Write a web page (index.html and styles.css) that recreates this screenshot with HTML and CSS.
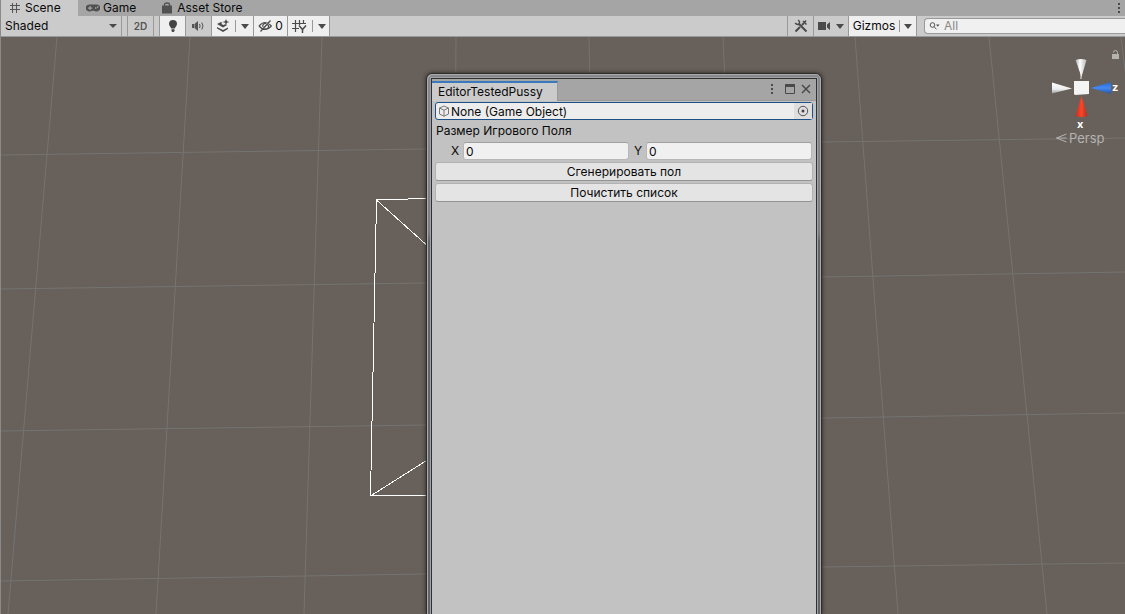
FILE: index.html
```html
<!DOCTYPE html>
<html lang="ru">
<head>
<meta charset="utf-8">
<title>Scene</title>
<link rel="stylesheet" href="styles.css">
</head>
<body>
<div class="editor">
  <nav class="tabs" role="tablist">
    <button class="tab tab-scene tab-active" role="tab" aria-selected="true">
      <svg width="12" height="12" viewBox="0 0 12 12" fill="none" stroke="#555" stroke-width="1"><path d="M3.500 1v10M7.500 1v10M1 3.500h10M1 7.500h10"/></svg>
      Scene
    </button>
    <button class="tab tab-game" role="tab" aria-selected="false">
      <svg width="14" height="10" viewBox="0 0 14 10"><path fill="#505050" fill-rule="evenodd" d="M4 1.500h6a4 3.500 0 1 1-2 6.300h-2a4 3.500 0 1 1-2-6.300zM3.500 3v1.500H2v1.200h1.500V7h1.200V5.700h1.500V4.500H4.700V3zM9 4.300v1.400h1.400V4.300zM11 3.300v1.400h1.400V3.300z"/></svg>
      Game
    </button>
    <button class="tab tab-store" role="tab" aria-selected="false">
      <svg width="12" height="12" viewBox="0 0 12 12"><path fill="#505050" d="M1 3.500h10v8H1z"/><path fill="none" stroke="#505050" stroke-width="1.300" d="M3.500 5V2.500C3.500.5 8.500.5 8.500 2.500V5"/></svg>
      Asset Store
    </button>
    <button class="tabs-menu" aria-label="Menu"><svg width="4" height="12" viewBox="0 0 4 12" fill="#4a4a4a"><path d="M1 1h2v2H1zM1 5h2v2H1zM1 9h2v2H1z"/></svg></button>
  </nav>

  <div class="toolbar">
    <label class="shading">
      <select aria-label="Shading mode"><option>Shaded</option></select>
      <svg class="caret" width="8" height="4" viewBox="0 0 8 4"><path d="M0 0h8L4 4z"/></svg>
    </label>
    <button class="tool tool-2d">2D</button>
    <div class="group">
      <button class="tool tool-small on" aria-label="Lighting"><svg width="12" height="14" viewBox="0 0 12 14" fill="#444"><path d="M6 1a4 4 0 0 0-4 4c0 2 2 3 2.200 4.500h3.600C8 8 10 7 10 5a4 4 0 0 0-4-4zM4.500 10.300h3V12L6.700 13H5.300l-.8-1z"/></svg></button>
      <button class="tool tool-small tool-audio" aria-label="Audio"><svg width="14" height="12" viewBox="0 0 14 12"><path fill="#555" d="M1 4h2v4H1zM3.500 4L7 1v10L3.500 8z"/><path fill="none" stroke="#555" d="M8.500 4q1.300 2 0 4M10.800 2.500q2.400 3.500 0 7"/></svg></button>
      <button class="tool tool-split on" aria-label="Effects">
        <svg width="14" height="14" viewBox="0 0 14 14" fill="#4a4a4a"><path d="M1 5l4-2 1.500 1-1.300.7 2 1.300 2-.7 2 .7L7 8.500zM1 8l6 3 5-2.500V10l-5 3-6-3.500zM10 0l1 2.200 2.500.8-2.500.8L10 6l-1-2.200L6.500 3 9 2.200z"/></svg>
        <span class="divider"></span>
        <svg class="caret" width="8" height="5" viewBox="0 0 8 5"><path d="M0 0h8L4 5z"/></svg>
      </button>
      <button class="tool tool-eye on" aria-label="Hidden objects: 0">
        <svg width="15" height="14" viewBox="0 0 15 14" fill="none" stroke="#4a4a4a" stroke-width="1.200"><path d="M1 7q6-7 12.500 0M1 7q6 7 12.500 0M12.500 1.500l-10 11"/><path d="M9.500 5.500a2.500 2.500 0 0 1-3 4M5 8a2.500 2.500 0 0 1 3-3.500"/></svg>
        <span>0</span>
      </button>
      <button class="tool tool-split on" aria-label="Grid">
        <svg width="15" height="15" viewBox="0 0 15 15" fill="none" stroke="#4a4a4a"><path stroke-width="1.200" d="M3.500 1v12M7.500 1v5M11.500 1v4M0 4.500h14M0 9.500h7"/><path stroke-width="1.500" d="M7 6.500l3.500 4L14 6.500M10.500 10v4"/></svg>
        <span class="divider"></span>
        <svg class="caret" width="8" height="5" viewBox="0 0 8 5"><path d="M0 0h8L4 5z"/></svg>
      </button>
    </div>
    <div class="group group-right">
      <button class="tool tool-small" aria-label="Tools"><svg width="14" height="14" viewBox="0 0 14 14" fill="none" stroke="#4a4a4a" stroke-width="2"><path d="M5 5l7.500 7.500M1.500 12.500L6 8M8 6l2-2"/><path stroke-width="1.500" d="M4 1.200q2.500 1.500 1 3.800-2 1.300-3.800-1M9 2l3.500 3.500M10 4l2-2.500"/></svg></button>
      <button class="tool tool-camera" aria-label="Camera">
        <svg width="13" height="10" viewBox="0 0 13 10" fill="#4a4a4a"><path d="M0 1h8v8H0zM9 3.500L12 1v8L9 6.500z"/></svg>
        <svg class="caret" width="8" height="5" viewBox="0 0 8 5"><path d="M0 0h8L4 5z"/></svg>
      </button>
      <button class="tool tool-gizmos on">Gizmos
        <span class="divider"></span>
        <svg class="caret" width="8" height="5" viewBox="0 0 8 5"><path d="M0 0h8L4 5z"/></svg>
      </button>
    </div>
    <label class="search">
      <svg width="11" height="8" viewBox="0 0 11 8" fill="none" stroke="#555"><circle cx="3.500" cy="3" r="2.300"/><path d="M5 4.700L7.500 7.300"/><path fill="#555" stroke="none" d="M7 2.500h3.600L8.800 4.700z"/></svg>
      <input type="text" placeholder="All" aria-label="Search">
    </label>
  </div>

  <main class="scene">
    <svg class="grid" viewBox="1 0 1124 577" preserveAspectRatio="none" fill="none">
      <g stroke="#757472">
        <path d="M57 0L8 577M190 0L156 577M322 0L304 577M456 0L452 577M589 0L599 577M723 0L749 577M855 0L898 577M989 0L1047 577M1121 0L1192 577"/>
        <path d="M0 118L425 112L823 105L1125 101M0 252L425 246L823 240L1125 235M0 394L425 388L823 381L1125 376M0 544L425 537L823 530L1125 526"/>
      </g>
      <path class="wire" stroke="#fff" d="M440 161L376.500 163L370.500 459L440 458M376.500 163L440 220M370.500 459L440 415"/>
    </svg>

    <div class="gizmo">
      <svg class="lock" width="8" height="9" viewBox="0 0 8 9"><path fill="#b5b3b0" d="M1 4h7v5H1z"/><path fill="none" stroke="#b5b3b0" d="M6.500 4V2.500Q6.500.5 4.500.5T2.500 2.500"/></svg>
      <svg class="axes" width="70" height="70" viewBox="0 0 70 70">
        <defs>
          <linearGradient id="up"><stop offset="0" stop-color="#aaa"/><stop offset=".4" stop-color="#fff"/><stop offset="1" stop-color="#b8b8b8"/></linearGradient>
          <linearGradient id="side" x2="0" y2="1"><stop offset="0" stop-color="#fff"/><stop offset=".6" stop-color="#eee"/><stop offset="1" stop-color="#999"/></linearGradient>
          <linearGradient id="red"><stop offset="0" stop-color="#c42f1a"/><stop offset=".5" stop-color="#f8472a"/><stop offset="1" stop-color="#b52b18"/></linearGradient>
          <linearGradient id="blue" x2="0" y2="1"><stop offset="0" stop-color="#2966c9"/><stop offset=".5" stop-color="#4489f5"/><stop offset="1" stop-color="#2354a8"/></linearGradient>
        </defs>
        <path d="M31 20V14" stroke="#eee"/>
        <path fill="url(#up)" d="M25.500 1q5.500-2 11 0l-5 17z"/>
        <path fill="url(#side)" d="M2 23.500v11l20-5z"/>
        <path fill="url(#red)" d="M31.500 37l6 20q-6 2-12 0z"/>
        <path fill="url(#blue)" d="M41 29l20-6v12z"/>
        <path fill="#f4f4f4" d="M24 22h15v13l-14 1-1-1z"/>
        <text x="62" y="32">z</text>
        <text x="27" y="69">x</text>
      </svg>
      <button class="persp"><svg width="11" height="10" viewBox="0 0 11 10" fill="none" stroke="#b5b3b0"><path d="M10.500 1L.5 5l10 4M.5 5h10"/></svg>Persp</button>
    </div>

    <section class="window">
      <div class="pane">
        <header class="titlebar">
          <h1 class="title">EditorTestedPussy</h1>
          <div class="window-actions">
            <button aria-label="Menu"><svg width="4" height="12" viewBox="0 0 4 12" fill="#4a4a4a"><path d="M1 1h2v2H1zM1 5h2v2H1zM1 9h2v2H1z"/></svg></button>
            <button aria-label="Maximize"><svg width="10" height="10" viewBox="0 0 10 10"><path fill="none" stroke="#4a4a4a" d="M.5.5h9v9h-9z"/><path fill="#4a4a4a" d="M0 0h10v3H0z"/></svg></button>
            <button aria-label="Close"><svg width="10" height="10" viewBox="0 0 10 10" fill="none" stroke="#4a4a4a" stroke-width="1.500"><path d="M1 1l8 8M9 1L1 9"/></svg></button>
          </div>
        </header>
        <form class="form">
          <div class="object-field">
            <svg width="12" height="12" viewBox="0 0 12 12" fill="none" stroke="#777"><path d="M6 1l4.500 2v6L6 11.200 1.500 9V3zM1.500 3L6 5.200 10.500 3M6 5.200v6"/></svg>
            <input type="text" value="None (Game Object)" aria-label="Game Object" readonly>
            <button type="button" class="picker" aria-label="Select object"><svg width="12" height="12" viewBox="0 0 12 12"><circle cx="6" cy="6" r="4.700" fill="none" stroke="#555"/><circle cx="6" cy="6" r="1.500" fill="#444"/></svg></button>
          </div>
          <fieldset class="vector">
            <legend>Размер Игрового Поля</legend>
            <div class="vector-row">
              <div class="axis"><label for="size-x">X</label><input id="size-x" type="text" value="0"></div>
              <div class="axis"><label for="size-y">Y</label><input id="size-y" type="text" value="0"></div>
            </div>
          </fieldset>
          <button type="button" class="action">Сгенерировать пол</button>
          <button type="button" class="action">Почистить список</button>
        </form>
      </div>
    </section>
  </main>
</div>
</body>
</html>
```
FILE: styles.css
```css
* { box-sizing: border-box; }

body {
  margin: 0;
  font-family: Inter, "Liberation Sans", sans-serif;
  font-size: 12px;
  line-height: 16px;
  color: #090909;
}

button, input, select {
  margin: 0;
  padding: 0;
  border: 0;
  border-radius: 0;
  background: none;
  font: inherit;
  color: inherit;
  outline: 0;
}

svg { flex: none; }

.editor {
  display: flex;
  flex-direction: column;
  height: 100vh;
  overflow: hidden;
  border-left: 1px solid #8a8a8a;
}

.tabs {
  display: flex;
  height: 16px;
  background: #a5a5a5;
}

.tab {
  display: flex;
  align-items: center;
  gap: 4px;
  padding: 0 8px;
}

.tab-game { gap: 3px; }
.tab-scene { width: 77px; }
.tab-store { padding-left: 17px; }
.tab-active { background: #cbcbcb; }

.tabs-menu {
  display: flex;
  align-items: center;
  margin-left: auto;
  padding: 0 4px;
}

.toolbar {
  display: flex;
  height: 21px;
  background: #cbcbcb;
  border-bottom: 1px solid #999;
}

.caret { fill: #4a4a4a; }

.shading {
  display: flex;
  align-items: center;
  width: 121px;
  padding: 0 4px;
  border-right: 1px solid #999;
}

.shading select {
  flex: 1;
  appearance: none;
}

.tool {
  display: flex;
  align-items: center;
  justify-content: center;
  border-right: 1px solid #999;
}

.tool.on { background: #efefef; }

.tool-2d {
  width: 27px;
  margin: 0 5px;
  border-left: 1px solid #999;
  font-size: 10px;
  font-weight: 600;
  color: #555;
}

.group {
  display: flex;
  border-left: 1px solid #999;
}

.group-right { margin-left: auto; }
.tool-small { width: 26px; }
.tool-audio { padding-right: 2px; }
.tool-split { width: 42px; gap: 5px; }
.tool-eye { width: 34px; gap: 2px; }
.tool-camera { width: 35px; gap: 5px; }
.tool-gizmos { width: 68px; gap: 4px; }

.divider {
  width: 1px;
  height: 12px;
  background: #999;
}

.search {
  display: flex;
  align-items: center;
  gap: 4px;
  width: 201px;
  margin: 2px 0 2px 7px;
  padding-left: 4px;
  background: #f0f0f0;
  border: 1px solid #999;
  border-right: 0;
  border-radius: 4px 0 0 4px;
}

.search input { flex: 1; min-width: 0; }
.search input::placeholder { color: #888; opacity: 1; }

.scene {
  position: relative;
  flex: 1;
  min-height: 0;
  overflow: hidden;
  background: #67605b;
}

.grid {
  display: block;
  width: 100%;
  height: 100%;
}

.grid path { vector-effect: non-scaling-stroke; }
.wire { shape-rendering: crispEdges; }

.gizmo {
  position: absolute;
  top: 13px;
  right: 4px;
  display: flex;
  flex-direction: column;
  align-items: flex-end;
  width: 71px;
}

.lock { margin-right: 2px; }

.axes {
  align-self: flex-start;
  overflow: visible;
}

.axes text {
  fill: #fff;
  font-size: 11px;
  font-weight: 700;
}

.persp {
  display: flex;
  align-items: center;
  align-self: flex-start;
  gap: 2px;
  padding: 1px 0 0 6px;
  font-size: 13px;
  color: #b5b3b0;
}

.window {
  position: absolute;
  top: 36px;
  bottom: 0;
  left: 425px;
  width: 396px;
  padding: 4px 4px 0;
  background: linear-gradient(#86888b, #7c7e81 158px, #606466 168px, #606466);
  border: 1px solid #2f2d2c;
  border-bottom: 0;
  border-radius: 6px 6px 0 0;
  box-shadow: 0 0 4px #28231f, inset 1px 1px #a9abae, inset -1px 0 #a9abae;
}

.pane {
  height: 100%;
  background: #c2c2c2;
  border: 1px solid #303030;
  border-bottom: 0;
  box-shadow: 0 0 0 1px #a0a2a4;
}

.titlebar {
  display: flex;
  justify-content: space-between;
  height: 22px;
  padding-top: 2px;
  background: #a5a5a5;
  border-bottom: 1px solid #999;
}

.title {
  width: 126px;
  margin: 0 0 -1px;
  padding: 1px 6px 0;
  background: #cbcbcb;
  border-top: 2px solid #3a79bb;
  border-right: 1px solid #999;
  font-size: 12px;
  font-weight: 400;
}

.window-actions {
  display: flex;
  align-items: center;
  gap: 6px;
  padding: 0 5px 3px 0;
}

.window-actions button { display: flex; }
.window-actions button:first-child { margin-right: 5px; }

.form {
  display: flex;
  flex-direction: column;
  gap: 2px;
  padding: 1px 3px;
}

.object-field {
  display: flex;
  align-items: center;
  height: 18px;
  padding-left: 2px;
  background: #ededed;
  border: 1px solid #1d5087;
  border-radius: 3px;
}

.object-field input { flex: 1; padding: 1px 0 0 1px; }

.picker {
  display: flex;
  align-items: center;
  justify-content: center;
  align-self: stretch;
  width: 18px;
  background: #dedede;
}

.vector {
  min-width: 0;
  margin: 0;
  padding: 0;
  border: 0;
}

.vector legend {
  padding: 1px 1px 3px;
}

.vector-row {
  display: flex;
  gap: 5px;
  padding: 0 1px 0 16px;
}

.axis {
  display: grid;
  flex: 1;
  grid-template-columns: 12px 1fr;
}

.axis label { line-height: 18px; }

.axis input {
  min-width: 0;
  height: 18px;
  padding: 0 2px;
  background: #f0f0f0;
  border: 1px solid #b7b7b7;
  border-top-color: #a0a0a0;
  border-radius: 3px;
}

.action {
  height: 19px;
  background: #e4e4e4;
  border: 1px solid #b2b2b2;
  border-bottom-color: #939393;
  border-radius: 3px;
}
```
